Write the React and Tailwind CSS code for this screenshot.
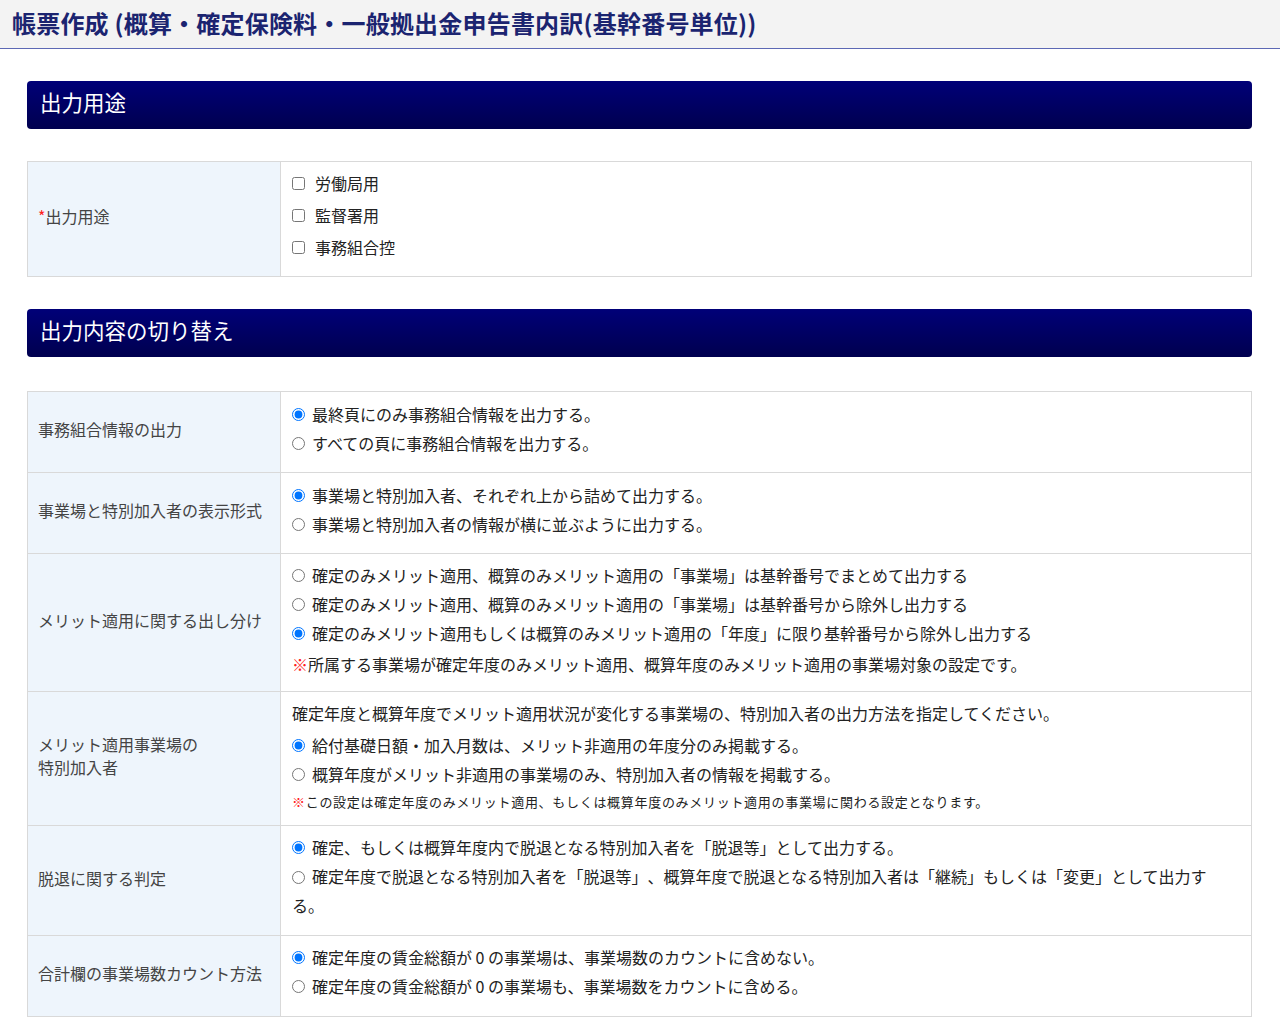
import React from 'react';

const font = { fontFamily: '"Noto Sans CJK JP", "Noto Sans", sans-serif' };

function SectionHeader({ title }) {
  return (
    <div className="h-[48px] rounded-[4px] bg-gradient-to-b from-[#000078] to-[#00004f] flex items-center px-[13px] pb-[6px]">
      <span className="text-white text-[21.5px] leading-none">{title}</span>
    </div>
  );
}

const inputClass = "m-0 w-[13px] h-[13px] shrink-0";
const labelClass = "w-[253px] shrink-0 bg-[#eef5fc] border-r border-[#d9d9d9] flex items-center px-[10px] pb-[5px] text-[16px] leading-[23px] text-[#444]";

function Radio({ checked, name, children }) {
  return (
    <div className="flex items-center h-[29px]">
      <input type="radio" name={name} defaultChecked={checked} className={inputClass} />
      <span className="ml-[7px] leading-[29px]">{children}</span>
    </div>
  );
}

function Row({ label, children, className = '' }) {
  return (
    <div className="flex border-t border-[#d9d9d9] first:border-t-0">
      <div className={labelClass}>{label}</div>
      <div className={`flex-1 pl-[11px] pr-[16px] text-[16px] text-[#222] ${className}`}>
        {children}
      </div>
    </div>
  );
}

const Mark = () => <span className="text-[#ff2020]">※</span>;

export default function App() {
  return (
    <div className="min-h-screen bg-white [text-spacing-trim:space-all]" style={font}>
      <div className="h-[49px] bg-[#f3f3f3] border-b border-[#5c68b4] flex items-center px-[12px] pb-[3px]">
        <h1 className="text-[24px] leading-none font-bold text-[#1b2470] tracking-[0.2px]">
          帳票作成 (概算・確定保険料・一般拠出金申告書内訳(基幹番号単位))
        </h1>
      </div>

      <div className="px-[27px] pr-[28px] pt-[32px] pb-[6px]">
        <SectionHeader title="出力用途" />

        <div className="mt-[32px] border border-[#d9d9d9]">
          <div className="flex">
            <div className={labelClass}>
              <span className="text-[#ff2020]">*</span>出力用途
            </div>
            <div className="flex-1 pl-[11px] pt-[5px] pb-[13px] text-[16px] text-[#222]">
              {['労働局用', '監督署用', '事務組合控'].map(t => (
                <div key={t} className="flex items-center h-[32px]">
                  <input type="checkbox" className={inputClass} />
                  <span className="ml-[10px]">{t}</span>
                </div>
              ))}
            </div>
          </div>
        </div>

        <div className="mt-[32px]">
          <SectionHeader title="出力内容の切り替え" />
        </div>

        <div className="mt-[34px] border border-[#d9d9d9]">
          <Row label="事務組合情報の出力" className="pt-[8px] pb-[14px]">
            <Radio name="r1" checked>最終頁にのみ事務組合情報を出力する。</Radio>
            <Radio name="r1">すべての頁に事務組合情報を出力する。</Radio>
          </Row>

          <Row label="事業場と特別加入者の表示形式" className="pt-[8px] pb-[14px]">
            <Radio name="r2" checked>事業場と特別加入者、それぞれ上から詰めて出力する。</Radio>
            <Radio name="r2">事業場と特別加入者の情報が横に並ぶように出力する。</Radio>
          </Row>

          <Row label="メリット適用に関する出し分け" className="pt-[7px] pb-[12px]">
            <Radio name="r3">確定のみメリット適用、概算のみメリット適用の「事業場」は基幹番号でまとめて出力する</Radio>
            <Radio name="r3">確定のみメリット適用、概算のみメリット適用の「事業場」は基幹番号から除外し出力する</Radio>
            <Radio name="r3" checked>確定のみメリット適用もしくは概算のみメリット適用の「年度」に限り基幹番号から除外し出力する</Radio>
            <div className="mt-[2px] leading-[29px]">
              <Mark />所属する事業場が確定年度のみメリット適用、概算年度のみメリット適用の事業場対象の設定です。
            </div>
          </Row>

          <Row label={<span>メリット適用事業場の<br />特別加入者</span>} className="pt-[7px] pb-[11px]">
            <div className="leading-[29px]">確定年度と概算年度でメリット適用状況が変化する事業場の、特別加入者の出力方法を指定してください。</div>
            <div className="mt-[3px]">
              <Radio name="r4" checked>給付基礎日額・加入月数は、メリット非適用の年度分のみ掲載する。</Radio>
              <Radio name="r4">概算年度がメリット非適用の事業場のみ、特別加入者の情報を掲載する。</Radio>
            </div>
            <div className="leading-[25px] text-[13px] tracking-[0.7px]">
              <Mark />この設定は確定年度のみメリット適用、もしくは概算年度のみメリット適用の事業場に関わる設定となります。
            </div>
          </Row>

          <Row label="脱退に関する判定" className="pt-[7px] pb-[15px]">
            <Radio name="r5" checked>確定、もしくは概算年度内で脱退となる特別加入者を「脱退等」として出力する。</Radio>
            <div className="leading-[29px]">
              <input type="radio" name="r5" className={`${inputClass} inline-block align-middle relative -top-[1px] mr-[7px]`} />
              確定年度で脱退となる特別加入者を「脱退等」、概算年度で脱退となる特別加入者は「継続」もしくは「変更」として出力する。
            </div>
          </Row>

          <Row label="合計欄の事業場数カウント方法" className="pt-[7px] pb-[15px]">
            <Radio name="r6" checked>確定年度の賃金総額が 0 の事業場は、事業場数のカウントに含めない。</Radio>
            <Radio name="r6">確定年度の賃金総額が 0 の事業場も、事業場数をカウントに含める。</Radio>
          </Row>
        </div>
      </div>
    </div>
  );
}
